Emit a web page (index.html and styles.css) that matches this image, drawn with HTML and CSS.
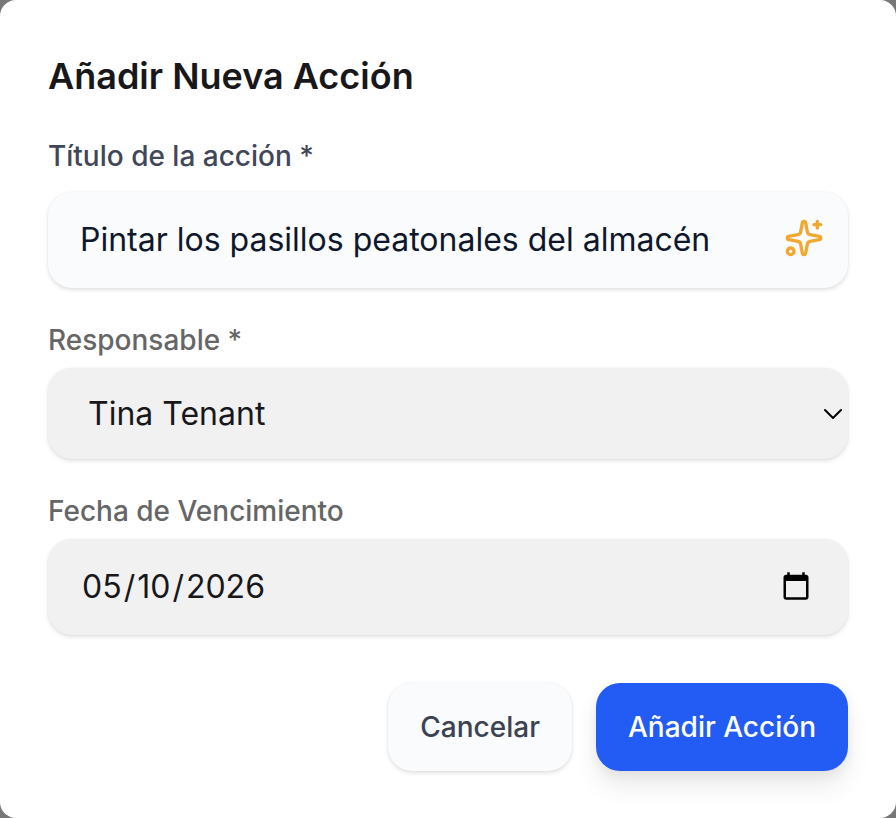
FILE: index.html
```html
<!DOCTYPE html>
<html lang="es">
<head>
<meta charset="utf-8">
<meta name="viewport" content="width=device-width, initial-scale=1">
<title>Añadir Nueva Acción</title>
<link rel="stylesheet" href="styles.css">
</head>
<body>
<main class="dialog">
  <h1 class="title">Añadir Nueva Acción</h1>
  <form class="form">
    <div class="field field-title">
      <label class="label label-strong" for="titulo">Título de la acción *</label>
      <div class="control control-light">
        <input class="input" id="titulo" type="text" value="Pintar los pasillos peatonales del almacén">
        <button class="icon-button sparkle" type="button" aria-label="Sugerir">
          <svg width="40" height="40" viewBox="0 0 24 24" fill="none" stroke="currentColor" stroke-width="2" stroke-linecap="round" stroke-linejoin="round"><path d="M11.017 2.814a1 1 0 0 1 1.966 0l1.051 5.558a2 2 0 0 0 1.594 1.594l5.558 1.051a1 1 0 0 1 0 1.966l-5.558 1.051a2 2 0 0 0-1.594 1.594l-1.051 5.558a1 1 0 0 1-1.966 0l-1.051-5.558a2 2 0 0 0-1.594-1.594l-5.558-1.051a1 1 0 0 1 0-1.966l5.558-1.051a2 2 0 0 0 1.594-1.594z"/><path d="M20 2v4M22 4h-4"/><circle cx="4" cy="20" r="2"/></svg>
        </button>
      </div>
    </div>
    <div class="field">
      <label class="label" for="responsable">Responsable *</label>
      <div class="control control-select">
        <select class="input select" id="responsable"><option>Tina Tenant</option></select>
        <svg class="chevron" width="18" height="12" viewBox="0 0 18 12" fill="none" stroke="currentColor" stroke-width="2" stroke-linecap="round" stroke-linejoin="round"><path d="M1 2l8 8 8-8"/></svg>
      </div>
    </div>
    <div class="field">
      <label class="label" for="fecha">Fecha de Vencimiento</label>
      <div class="control control-date">
        <input class="input date" id="fecha" type="date" value="2026-05-10">
      </div>
    </div>
    <div class="actions">
      <button class="button cancel" type="button">Cancelar</button>
      <button class="button submit" type="submit">Añadir Acción</button>
    </div>
  </form>
</main>
</body>
</html>
```
FILE: styles.css
```css
* { box-sizing: border-box; }
body { margin: 0; background: #777; font-family: Inter, sans-serif; }
.dialog { min-height: 100vh; padding: 52px 48px 47px; background: #fff; border-radius: 16px; }
.title { margin: 0 0 36px; font-size: 36px; line-height: 48px; font-weight: 600; color: #18181b; }
.form { display: flex; flex-direction: column; gap: 32px; }
.field { display: flex; flex-direction: column; gap: 8px; }
.field-title { gap: 16px; }
.label { font-size: 28px; line-height: 40px; font-weight: 500; color: #666; }
.label-strong { color: #414658; }
.control { display: flex; align-items: center; height: 96px; padding: 0 24px 0 32px; border-radius: 24px; background: #f1f1f1; box-shadow: 0 2px 4px rgba(0,0,0,.12), 0 0 2px rgba(0,0,0,.06); }
.control-light { background: #f9fbfd; }
.control-select { height: 91px; padding: 0 6px 0 40px; }
.control-date { padding: 0 36px 0 32px; }
.input { flex: 1; min-width: 0; border: 0; padding: 0; outline: 0; background: none; font: 400 32px/48px Inter, sans-serif; color: #0f172b; }
.select { appearance: none; color: #18181b; }
.date { color: #18181b; }
.date::-webkit-datetime-edit { padding: 0; }
.date::-webkit-datetime-edit-month-field,
.date::-webkit-datetime-edit-day-field,
.date::-webkit-datetime-edit-year-field { padding: 0 2px; }
.date::-webkit-calendar-picker-indicator { width: 32px; height: 32px; padding: 0; }
.icon-button { display: flex; border: 0; padding: 0; background: none; color: #000; }
.sparkle { padding-bottom: 4px; color: #f0a830; }
.actions { display: flex; justify-content: flex-end; gap: 24px; margin-top: 16px; }
.button { height: 88px; padding: 0 32px; border: 0; border-radius: 24px; font: 500 28px/40px Inter, sans-serif; }
.cancel { color: #3c4252; background: #f9fbfd; box-shadow: 0 2px 4px rgba(0,0,0,.12), 0 0 2px rgba(0,0,0,.06); }
.submit { color: #fff; background: #235cf5; box-shadow: 0 16px 24px rgba(0,0,0,.08), 0 4px 12px rgba(0,0,0,.06); }
```
